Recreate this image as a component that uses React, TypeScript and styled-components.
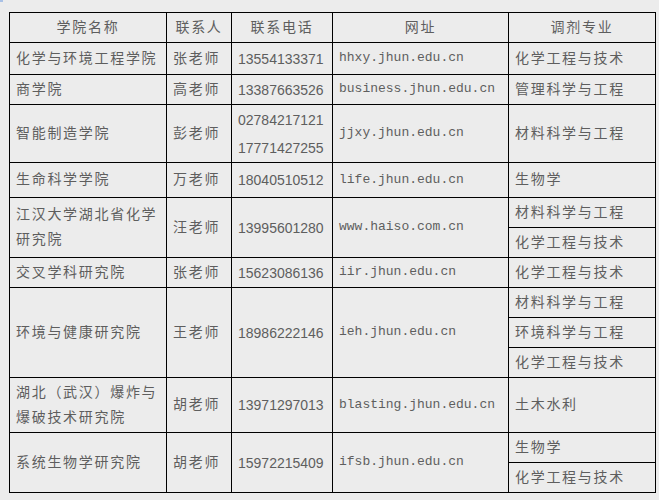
import React from "react";
import styled, { createGlobalStyle } from "styled-components";

const GlobalStyle = createGlobalStyle`
  html, body {
    margin: 0;
    padding: 0;
    background: #ececec;
  }
  body {
    font-family: "Noto Sans CJK SC", "Noto Sans", sans-serif;
  }
`;

const Page = styled.div`
  position: relative;
  padding: 12px 0 0 9px;
  min-height: 488px;
  background: #ececec;
`;

const Corner = styled.span`
  position: absolute;
  left: 0;
  top: 0;
  width: 3px;
  height: 2px;
  background: #a9c1e6;
`;

const Table = styled.table`
  border-collapse: collapse;
  table-layout: fixed;
  width: 646px;
  color: #5e5e5e;
`;

const Row = styled.tr<{ $h: number }>`
  height: ${({ $h }) => $h}px;
`;

const HeadCell = styled.th`
  border: 1px solid #000;
  padding: 0 0 3px;
  font-weight: 400;
  font-size: 14px;
  line-height: 25px;
  letter-spacing: 1.7px;
  text-align: center;
  vertical-align: middle;
  font-family: "Noto Sans CJK SC", sans-serif;
`;

const Cell = styled.td<{ $kind?: "cn" | "tel" | "url" }>`
  border: 1px solid #000;
  padding: 0 4px ${({ $kind }) => ($kind === "cn" ? "3px" : $kind === "url" ? "2px" : "0")} 6px;
  vertical-align: middle;
  text-align: left;
  white-space: nowrap;
  font-family: ${({ $kind }) =>
    $kind === "tel"
      ? `"Liberation Sans", Arial, sans-serif`
      : $kind === "url"
      ? `"Liberation Mono", monospace`
      : `"Noto Sans CJK SC", sans-serif`};
  font-size: ${({ $kind }) => ($kind === "url" ? "13px" : "14px")};
  letter-spacing: ${({ $kind }) => ($kind === "cn" || !$kind ? "1.7px" : "0")};
  line-height: ${({ $kind }) => ($kind === "tel" ? "28px" : "25px")};
`;

type Entry = {
  name: string[];
  person: string;
  phones: string[];
  url: string;
  majors: string[];
  heights: number[];
};

const data: Entry[] = [
  { name: ["化学与环境工程学院"], person: "张老师", phones: ["13554133371"], url: "hhxy.jhun.edu.cn", majors: ["化学工程与技术"], heights: [32] },
  { name: ["商学院"], person: "高老师", phones: ["13387663526"], url: "business.jhun.edu.cn", majors: ["管理科学与工程"], heights: [30] },
  { name: ["智能制造学院"], person: "彭老师", phones: ["02784217121", "17771427255"], url: "jjxy.jhun.edu.cn", majors: ["材料科学与工程"], heights: [58] },
  { name: ["生命科学学院"], person: "万老师", phones: ["18040510512"], url: "life.jhun.edu.cn", majors: ["生物学"], heights: [35] },
  { name: ["江汉大学湖北省化学", "研究院"], person: "汪老师", phones: ["13995601280"], url: "www.haiso.com.cn", majors: ["材料科学与工程", "化学工程与技术"], heights: [30, 30] },
  { name: ["交叉学科研究院"], person: "张老师", phones: ["15623086136"], url: "iir.jhun.edu.cn", majors: ["化学工程与技术"], heights: [30] },
  { name: ["环境与健康研究院"], person: "王老师", phones: ["18986222146"], url: "ieh.jhun.edu.cn", majors: ["材料科学与工程", "环境科学与工程", "化学工程与技术"], heights: [30, 30, 30] },
  { name: ["湖北（武汉）爆炸与", "爆破技术研究院"], person: "胡老师", phones: ["13971297013"], url: "blasting.jhun.edu.cn", majors: ["土木水利"], heights: [55] },
  { name: ["系统生物学研究院"], person: "胡老师", phones: ["15972215409"], url: "ifsb.jhun.edu.cn", majors: ["生物学", "化学工程与技术"], heights: [30, 30] },
];

const lines = (items: string[]) =>
  items.map((t, i) => (
    <React.Fragment key={i}>
      {i > 0 && <br />}
      {t}
    </React.Fragment>
  ));

export default function App() {
  return (
    <>
      <GlobalStyle />
      <Page>
        <Corner />
        <Table>
          <colgroup>
            <col style={{ width: 157 }} />
            <col style={{ width: 65 }} />
            <col style={{ width: 101 }} />
            <col style={{ width: 176 }} />
            <col style={{ width: 147 }} />
          </colgroup>
          <thead>
            <Row $h={30}>
              <HeadCell>学院名称</HeadCell>
              <HeadCell>联系人</HeadCell>
              <HeadCell>联系电话</HeadCell>
              <HeadCell>网址</HeadCell>
              <HeadCell>调剂专业</HeadCell>
            </Row>
          </thead>
          <tbody>
            {data.map((e, idx) =>
              e.majors.map((m, j) => (
                <Row key={`${idx}-${j}`} $h={e.heights[j]}>
                  {j === 0 && (
                    <>
                      <Cell $kind="cn" rowSpan={e.majors.length}>
                        {lines(e.name)}
                      </Cell>
                      <Cell $kind="cn" rowSpan={e.majors.length}>
                        {e.person}
                      </Cell>
                      <Cell $kind="tel" rowSpan={e.majors.length}>
                        {lines(e.phones)}
                      </Cell>
                      <Cell $kind="url" rowSpan={e.majors.length}>
                        {e.url}
                      </Cell>
                    </>
                  )}
                  <Cell $kind="cn">{m}</Cell>
                </Row>
              ))
            )}
          </tbody>
        </Table>
      </Page>
    </>
  );
}
